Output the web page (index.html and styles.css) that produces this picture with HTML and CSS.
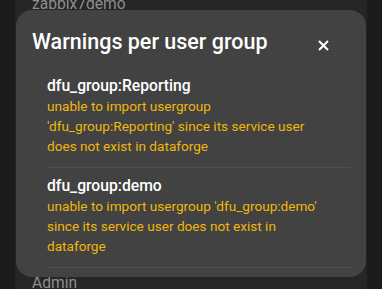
FILE: index.html
```html
<html>
  <head>
    <title>Warnings per user group</title>
    <link rel="stylesheet" href="styles.css">
  </head>
  <body>
    <div class="page">
      <div class="bg-item bg-top">zabbix7demo</div>
      <div class="bg-item bg-bottom">Admin</div>
    </div>

    <div class="dialog">
      <div class="dialog-header">
        <h2>Warnings per user group</h2>
        <button class="close-btn" aria-label="Close">
          <svg width="11" height="11" viewBox="0 0 11 11">
            <path d="M1 1 L10 10 M10 1 L1 10" stroke="#fff" stroke-width="2" />
          </svg>
        </button>
      </div>

      <div class="warning-list">
        <div class="warning">
          <div class="group-name">dfu_group:Reporting</div>
          <div class="message">unable to import usergroup 'dfu_group:Reporting' since its service user does not exist in dataforge</div>
        </div>
        <div class="warning">
          <div class="group-name">dfu_group:demo</div>
          <div class="message">unable to import usergroup 'dfu_group:demo' since its service user does not exist in dataforge</div>
        </div>
      </div>
    </div>
  </body>
</html>
```

FILE: styles.css
```css
body {
  margin: 0;
  background: #1b1b1b;
  font-family: Roboto, "Liberation Sans", sans-serif;
  overflow: hidden;
}

.page {
  margin: 0 15px;
  height: 289px;
  background: #262626;
  position: relative;
}
.bg-item { position: absolute; left: 17px; color: #8e8e8e; font-size: 15.6px; }
.bg-top { top: -5px; }
.bg-bottom { top: 274px; }

.dialog {
  position: absolute;
  left: 16px; top: 10px;
  width: 350px; height: 267px;
  box-sizing: border-box;
  background: #424242;
  border-radius: 16px;
  padding: 16px 15px 0 16px;
}
.dialog-header {
  display: flex;
  align-items: flex-start;
  justify-content: space-between;
}
.dialog-header h2 {
  margin: 0;
  color: #fff;
  font-size: 21.5px;
  font-weight: 500;
  line-height: 32px;
}
.close-btn {
  background: none; border: 0; padding: 0;
  width: 40px; height: 32px;
  margin: 3px 8px 0 0;
  display: flex; align-items: center; justify-content: center;
}

.warning-list { margin: 7px 0 0 15px; }
.warning {
  padding: 8px 24px 11px 0;
  border-bottom: 1px solid #4f4f4f;
}
.group-name { color: #fff; font-size: 15.7px; font-weight: 500; line-height: 20px; }
.message { color: #f0b70a; font-size: 13.6px; line-height: 20px; }
```
